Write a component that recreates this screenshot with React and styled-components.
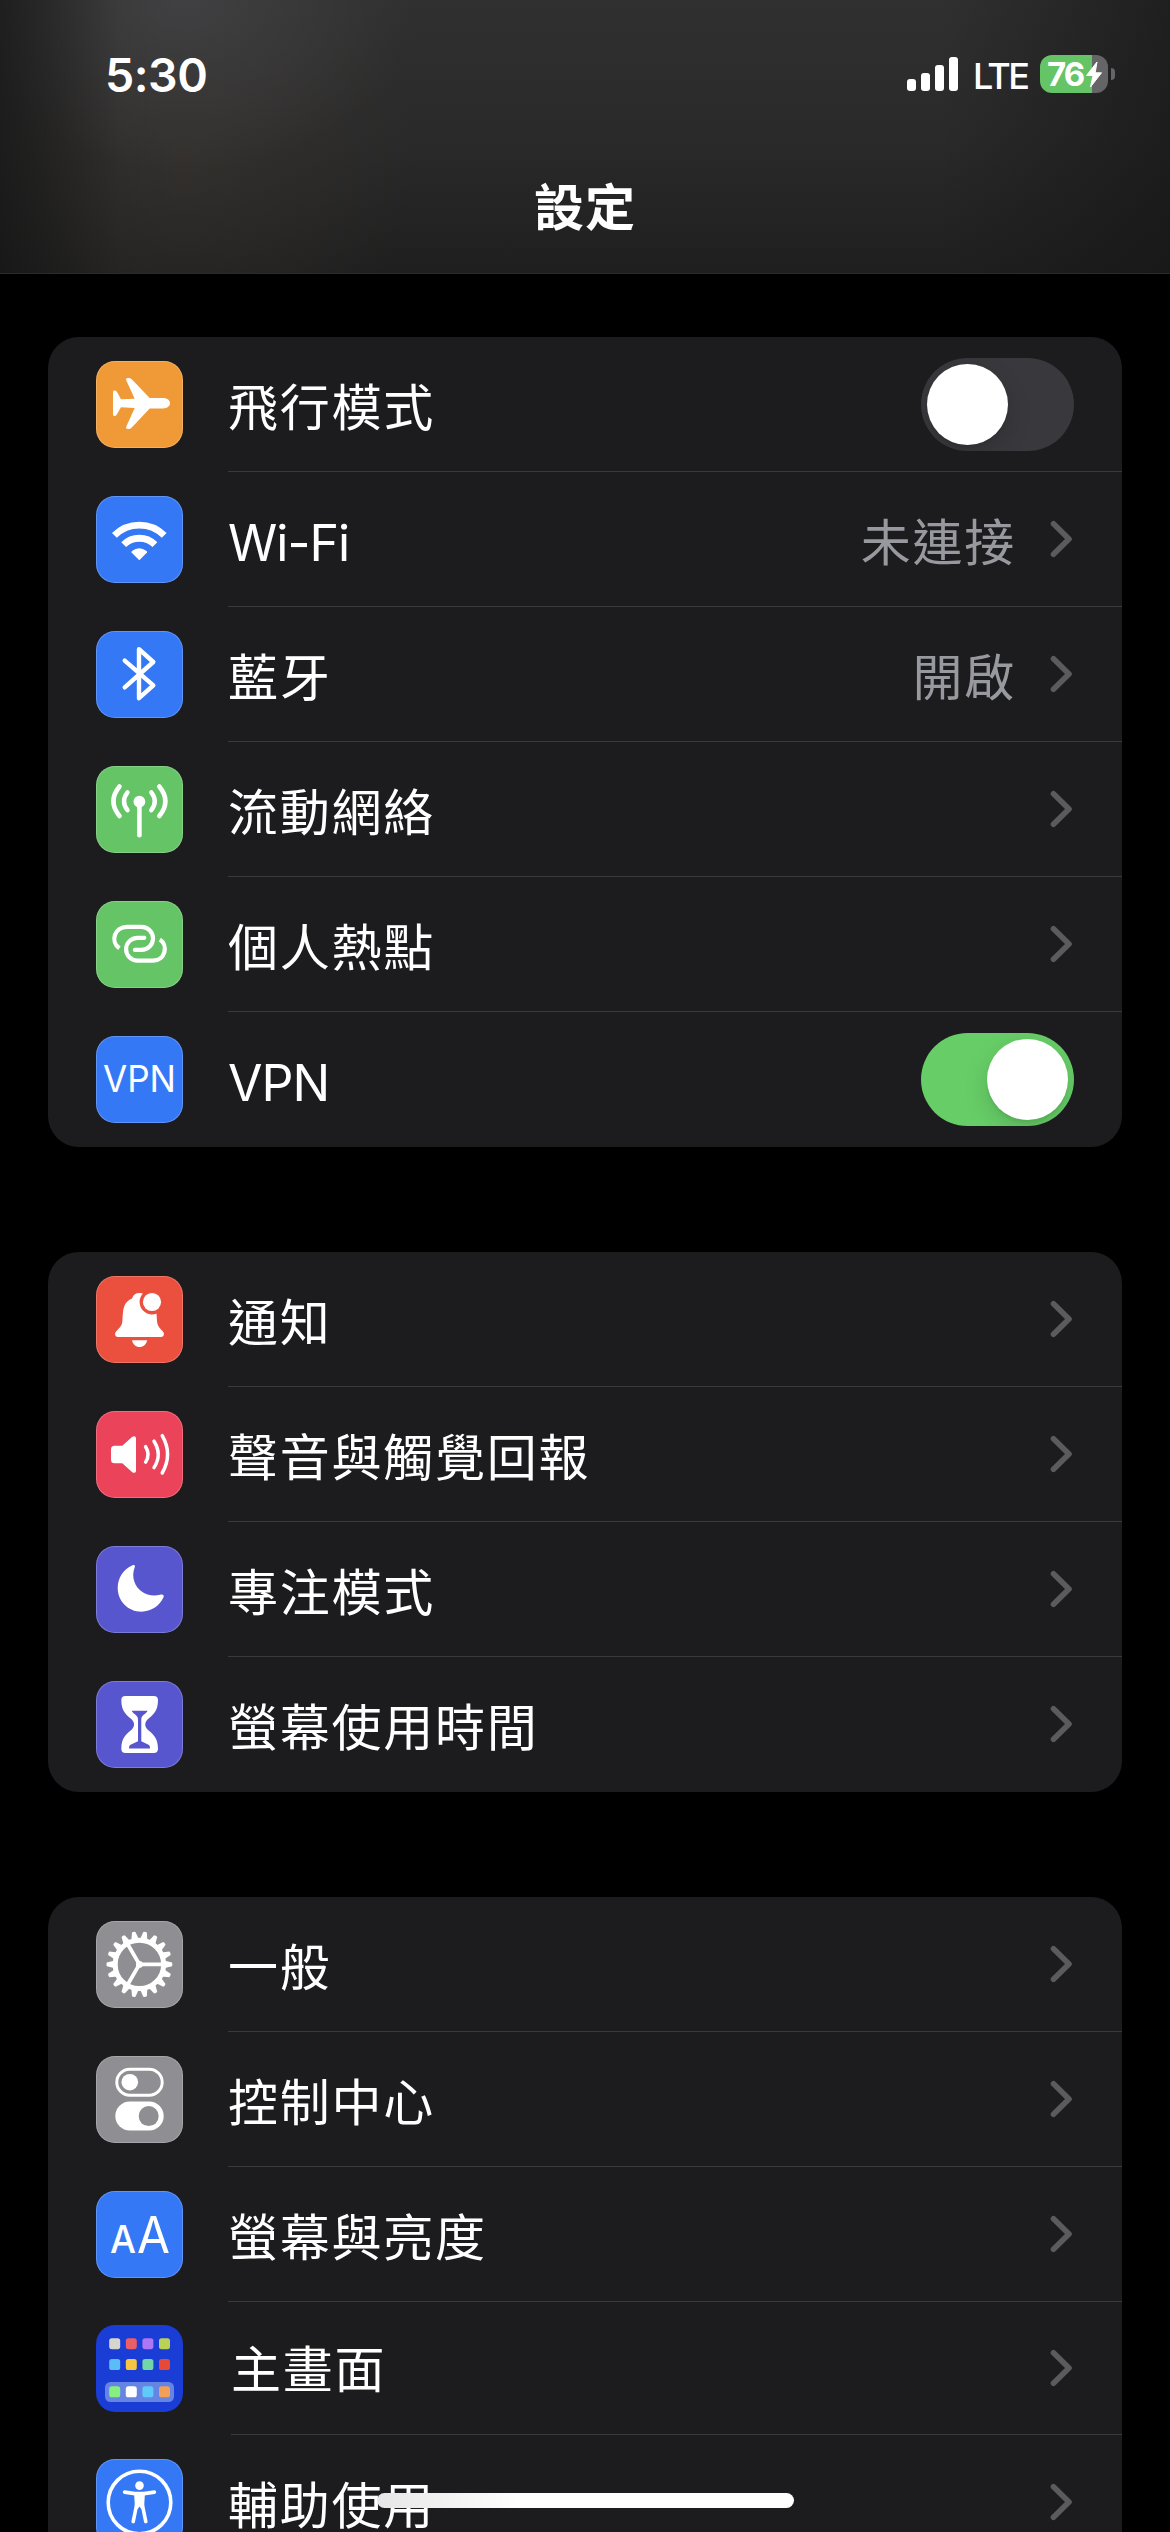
import React from "react";
import styled, { createGlobalStyle, css } from "styled-components";

const GlobalStyle = createGlobalStyle`
  * {
    box-sizing: border-box;
  }

  body {
    margin: 0;
    background-color: #000;
    font-family: "Inter", "Noto Sans CJK TC", sans-serif;
    color: #fff;
  }
`;

const Screen = styled.div`
  position: relative;
  width: 1170px;
  height: 2532px;
  overflow: hidden;
  background-color: #000;
`;

const Header = styled.header`
  display: flex;
  flex-direction: column;
  height: 274px;
  border-bottom: 1px solid #2b2b2b;
  background: linear-gradient(
      90deg,
      rgba(20, 20, 20, 0.65) 0,
      rgba(20, 20, 20, 0) 120px,
      rgba(20, 20, 20, 0) 940px,
      rgba(20, 20, 20, 0.6) 1170px
    ),
    radial-gradient(
      ellipse 230px 170px at 185px 0,
      rgba(70, 70, 73, 0.7),
      rgba(70, 70, 73, 0)
    ),
    radial-gradient(
      ellipse 230px 240px at 185px 150px,
      rgba(62, 56, 51, 0.48),
      rgba(62, 56, 51, 0)
    ),
    linear-gradient(180deg, #303030 0, #2a2a2a 50%, #1f1f1f 100%);
`;

const StatusBar = styled.div`
  display: flex;
  align-items: center;
  justify-content: space-between;
  height: 148px;
  padding: 0 55px 0 105px;
`;

const Time = styled.span`
  padding-top: 1px;
  font-size: 46.5px;
  font-weight: 600;
  line-height: 60px;
  letter-spacing: -0.5px;
`;

const StatusIcons = styled.div`
  display: flex;
  align-items: center;
`;

const Signal = styled.div`
  display: flex;
  align-items: flex-end;
  gap: 5px;
  height: 34px;
`;

const SignalBar = styled.i`
  width: 9px;
  height: ${({ $height }) => $height}px;
  border-radius: 3px;
  background-color: #fff;
`;

const Network = styled.span`
  width: 54px;
  margin: 4px 13px 0 15px;
  font-size: 36px;
  font-weight: 500;
  line-height: 44px;
  letter-spacing: -2.6px;
  white-space: nowrap;
`;

const Battery = styled.div`
  display: flex;
  align-items: center;
  width: 68px;
  height: 38px;
  padding-left: 7px;
  border-radius: 12px;
  background: linear-gradient(90deg, #65c466 52px, #656567 52px);
`;

const BatteryLevel = styled.span`
  width: 38px;
  font-size: 33px;
  font-weight: 700;
  line-height: 38px;
  letter-spacing: -2px;
`;

const BatteryTip = styled.i`
  width: 4px;
  height: 12px;
  margin-left: 3px;
  border-radius: 0 5px 5px 0;
  background-color: #656567;
`;

const Title = styled.h1`
  margin: 0;
  padding-top: 23px;
  font-size: 50px;
  font-weight: 700;
  line-height: 74px;
  text-align: center;
  letter-spacing: 1px;
`;

const Content = styled.main`
  display: flex;
  flex-direction: column;
  gap: 105px;
  padding: 63px 48px 0;
`;

const Card = styled.section`
  border-radius: 31px;
  background-color: #1c1c1e;
  overflow: hidden;
`;

const Row = styled.div`
  display: flex;
  align-items: flex-start;
  height: ${({ $short }) => ($short ? 133 : 135)}px;
  padding-left: 48px;
`;

const IconTile = styled.div`
  flex: none;
  width: 87px;
  height: 87px;
  margin-top: ${({ $short }) => ($short ? 23 : 24)}px;
  border-radius: 19px;
  background-color: ${({ $color }) => $color};
  overflow: hidden;
  ${({ $plain }) =>
    !$plain &&
    css`
      box-shadow: inset 0 0 0 1px rgba(255, 255, 255, 0.22);
    `}

  svg {
    display: block;
  }
`;

const RowBody = styled.div`
  display: flex;
  flex: 1;
  align-items: center;
  height: 100%;
  margin-left: ${({ $short }) => ($short ? 48 : 45)}px;
  padding-right: 48px;
  border-bottom: 1px solid ${({ $last }) => ($last ? "transparent" : "#3a3a3c")};
`;

const Label = styled.span`
  flex: 1;
  padding-top: ${({ $short }) => ($short ? 4 : 7)}px;
  font-size: 50px;
  line-height: 72px;
  letter-spacing: ${({ $latin }) => ($latin ? -1 : 1.75)}px;
  white-space: nowrap;
`;

const Value = styled.span`
  margin-right: 34px;
  padding-top: 7px;
  color: #98989f;
  font-size: 50px;
  line-height: 72px;
  letter-spacing: 1.75px;
`;

const Switch = styled.div`
  display: flex;
  justify-content: ${({ $on }) => ($on ? "flex-end" : "flex-start")};
  width: 153px;
  height: 93px;
  padding: 6px;
  border-radius: 47px;
  background-color: ${({ $on }) => ($on ? "#67ce67" : "#39393d")};
  overflow: hidden;
`;

const Knob = styled.i`
  width: 81px;
  height: 81px;
  border-radius: 50%;
  background-color: #fff;
  box-shadow: 0 9px 24px rgba(0, 0, 0, 0.15), 0 3px 3px rgba(0, 0, 0, 0.06);
`;

const HomeIndicator = styled.div`
  position: absolute;
  left: 377px;
  bottom: 24px;
  width: 417px;
  height: 15px;
  border-radius: 8px;
  background: linear-gradient(90deg, #e6e6e6, #fff 35%);
`;

const Glyph = ({ children }) => (
  <svg width="87" height="87" viewBox="0 0 87 87" fill="#fff">
    {children}
  </svg>
);

const Lines = ({ width = 4, cap = "round", children }) => (
  <g
    fill="none"
    stroke="#fff"
    strokeWidth={width}
    strokeLinecap={cap}
    strokeLinejoin="round"
  >
    {children}
  </g>
);

const Airplane = () => (
  <Glyph>
    <path d="M25 38.3 38.7 37.8 30.1 19Q29.6 17 31.5 17H33Q34.8 17 36 18.5L53.7 37H67C71.5 37 74 39.5 74 42.3 74 45 71.5 47.5 67 47.5H53.7L36 66.3Q34.8 68 33 68H31.5Q29.6 68 30.1 66L38.7 47 25 46.3 20.5 54Q20 55 18.5 55 17 55 17 53.5V31Q17 29.6 18.5 29.6 20 29.6 21 31Z" />
  </Glyph>
);

const Wifi = () => (
  <Glyph>
    <Lines width="6.8" cap="butt">
      <path d="M18.4 39.4A35.2 35.2 0 0 1 68.2 39.4M27.7 48.7A22.1 22.1 0 0 1 58.9 48.7" />
    </Lines>
    <path d="M43.3 64.2 35.6 56.4Q35.2 55.8 36 55.1 43.3 49.5 50.6 55.1 51.4 55.8 51 56.4Z" />
  </Glyph>
);

const Bluetooth = () => (
  <Glyph>
    <Lines width="4.4">
      <path d="M28.7 29.7 57.3 54.3 43 67.2V18.2L57.3 31 28.7 56.3" />
    </Lines>
  </Glyph>
);

const Antenna = () => (
  <Glyph>
    <circle cx="43.4" cy="35.7" r="5.9" />
    <Lines width="4.6">
      <path d="M43.4 38V69.3" />
      <path d="M63.3 20.5Q75.5 35.3 63.3 50M23.5 20.5Q11.3 35.3 23.5 50" />
    </Lines>
    <Lines width="4.4">
      <path d="M55.3 26.3Q62.3 35.3 55.3 44.2M31.5 26.3Q24.5 35.3 31.5 44.2" />
    </Lines>
  </Glyph>
);

const Hotspot = () => (
  <Glyph>
    <Lines width="4.2" cap="butt">
      <path d="M23.4 47.3C13.8 40.5 18.5 25.9 31 25.9H45.5A11.5 11.5 0 0 1 45.5 48.9H39" />
      <path d="M48.5 36.8H41.5A11.4 11.4 0 0 0 41.5 59.6H57C69.5 59.6 72.5 44 63.8 38.5" />
      <path strokeLinecap="round" d="M39 48.9H38.9M48.2 36.8H48.3" />
    </Lines>
  </Glyph>
);

const Vpn = () => (
  <Glyph>
    <text
      x="7"
      y="55.7"
      fontFamily="Inter, sans-serif"
      fontSize="37"
      textLength="73"
      lengthAdjust="spacingAndGlyphs"
    >
      VPN
    </text>
  </Glyph>
);

const Bell = () => (
  <Glyph>
    <path d="M22 61C19 61 18 57.5 20.5 55 24 51.3 26 49.5 26.4 45 27 33 27.2 26.3 36 22.5 37.2 18.8 40 17 43.3 17 46.7 17 50 18.8 51 22.5 59.8 26.3 60.5 33 61 45 61.4 49.5 63 51.3 66.5 55 69 57.5 68 61 65 61ZM36 64.2H51.2C50.4 68.4 47.2 71 43.6 71 40 71 36.8 68.4 36 64.2Z" />
    <circle cx="56" cy="26" r="12.4" fill="#eb4f3d" />
    <circle cx="56" cy="26" r="9.1" />
  </Glyph>
);

const Speaker = () => (
  <Glyph>
    <path d="M18.5 34.7H26.3L36 26C37.8 24.5 40 25 40 27.5V59.5C40 62 37.8 62.5 36 61L26.3 52.2H18.5Q15 52.2 15 48.7V38.2Q15 34.7 18.5 34.7Z" />
    <Lines width="3.5">
      <path d="M49.6 35.7Q54.6 43.4 49.6 51.1M58 30.2Q66.5 43.4 58 56.6M66.2 24.7Q77 43.4 66.2 62" />
    </Lines>
  </Glyph>
);

const Moon = () => (
  <Glyph>
    <path d="M38.8 21C36.8 26 36.8 31 38.3 35.5 41.5 45.5 52 51.5 64 48.8 67 47.8 68.4 49.2 67.4 51.6 63.5 60 55 65.7 45.5 65.7 32 65.7 21.7 55 21.7 42 21.7 32 27.5 23 36.5 19.3 38.4 18.6 39.4 19.4 38.8 21Z" />
  </Glyph>
);

const Hourglass = () => (
  <Glyph>
    <path d="M29.5 15H57.8Q62 15 62 19.2C62 31 56 34.5 51.5 38.5 48.5 41.5 48.5 45.5 51.5 48.5 56 52.5 62 56 62 67.8Q62 72 57.8 72H29.5Q25.3 72 25.3 67.8C25.3 56 31.3 52.5 35.8 48.5 38.8 45.5 38.8 41.5 35.8 38.5 31.3 34.5 25.3 31 25.3 19.2Q25.3 15 29.5 15Z" />
    <path
      fill="#5856ce"
      d="M35.7 29.7H51.6C50.5 32.6 45.3 34.2 45.3 38V60.3L53 64Q54.2 65 54 67.5H33Q32.8 65 34 64L42 60.3V38C42 34.2 36.8 32.6 35.7 29.7Z"
    />
  </Glyph>
);

const Gear = () => (
  <Glyph>
    {Array.from({ length: 18 }, (_, i) => (
      <path
        key={i}
        d="M68 39.6 76 41.6Q76.8 43.4 76 45.2L68 47.2Z"
        transform={`rotate(${i * 20} 43.4 43.4)`}
      />
    ))}
    <Lines width="5">
      <circle cx="43.4" cy="43.4" r="24.2" />
    </Lines>
    <Lines width="3.8">
      <path d="M43.4 43.4H67M43.4 43.4 31.6 23M43.4 43.4 31.6 63.8" />
    </Lines>
    <circle cx="43.4" cy="43.4" r="3.4" />
  </Glyph>
);

const Toggles = () => (
  <Glyph>
    <Lines width="3">
      <rect x="20.8" y="13.2" width="45.4" height="26" rx="13" />
    </Lines>
    <circle cx="33.8" cy="26.2" r="8.3" />
    <rect x="19.3" y="45.6" width="48.4" height="29" rx="14.5" />
    <circle cx="52.7" cy="60.1" r="10" fill="#8e8e93" />
  </Glyph>
);

const TextSize = () => (
  <Glyph>
    <g fontFamily="Inter, sans-serif">
      <text
        x="14"
        y="61.7"
        fontSize="38"
        fontWeight="500"
        textLength="26"
        lengthAdjust="spacingAndGlyphs"
      >
        A
      </text>
      <text x="41" y="61.7" fontSize="50" textLength="33" lengthAdjust="spacingAndGlyphs">
        A
      </text>
    </g>
  </Glyph>
);

const appColors = [
  ["#d6d6ce", "#ea5e67", "#ae76f5", "#b9d255"],
  ["#5bbdf8", "#f7c444", "#71d6a8", "#e64a37"],
  ["#86ef7f", "#ffffff", "#5fcaf9", "#f2a057"],
];

const HomeGrid = () => (
  <Glyph>
    <rect x="9" y="57" width="69" height="20" rx="5.5" fill="#6684e3" />
    {appColors.map((row, y) =>
      row.map((color, x) => (
        <rect
          key={color}
          x={13.2 + x * 16.6}
          y={[13.2, 34, 61.3][y]}
          width="11"
          height="11"
          rx="2.6"
          fill={color}
        />
      ))
    )}
  </Glyph>
);

const Accessibility = () => (
  <Glyph>
    <Lines width="3.6">
      <circle cx="43.5" cy="43.5" r="31.3" />
      <path d="M28.6 33.1 39 34.6H48L58.4 33.1" />
      <path d="M40.6 46 37.2 62.6M46.4 46 49.8 62.6" />
    </Lines>
    <circle cx="43.5" cy="26.6" r="4.3" />
    <path d="M38 33H49L48 50H45.3L43.5 47.5 41.7 50H39Z" />
  </Glyph>
);

const Chevron = () => (
  <svg width="24" height="40" viewBox="0 0 24 40">
    <path
      d="M3.5 4.7 19 20 3.5 35.3"
      fill="none"
      stroke="#5b5b5f"
      strokeWidth="5.6"
      strokeLinecap="round"
      strokeLinejoin="round"
    />
  </svg>
);

const Bolt = () => (
  <svg width="18" height="27" viewBox="0 0 18 27">
    <path
      d="M12 1 1.5 14.5H8L5.5 26 16.5 11.8H10.2Z"
      fill="#fff"
      stroke="#fff"
      strokeLinejoin="round"
    />
  </svg>
);

const groups = [
  [
    { label: "飛行模式", color: "#f09a37", icon: Airplane, toggle: "off" },
    { label: "Wi-Fi", color: "#3478f6", icon: Wifi, value: "未連接", latin: true },
    { label: "藍牙", color: "#3478f6", icon: Bluetooth, value: "開啟" },
    { label: "流動網絡", color: "#65c466", icon: Antenna },
    { label: "個人熱點", color: "#65c466", icon: Hotspot },
    { label: "VPN", color: "#3478f6", icon: Vpn, toggle: "on", latin: true },
  ],
  [
    { label: "通知", color: "#eb4f3d", icon: Bell },
    { label: "聲音與觸覺回報", color: "#eb445a", icon: Speaker },
    { label: "專注模式", color: "#5856ce", icon: Moon },
    { label: "螢幕使用時間", color: "#5856ce", icon: Hourglass },
  ],
  [
    { label: "一般", color: "#8e8e93", icon: Gear },
    { label: "控制中心", color: "#8e8e93", icon: Toggles },
    { label: "螢幕與亮度", color: "#3478f6", icon: TextSize },
    { label: "主畫面", color: "#1a3dd5", icon: HomeGrid, short: true, plain: true },
    { label: "輔助使用", color: "#3478f6", icon: Accessibility },
  ],
];

const SettingRow = ({ item, last }) => {
  const { label, color, icon: Icon, value, toggle, latin, short, plain } = item;
  return (
    <Row $short={short}>
      <IconTile $color={color} $short={short} $plain={plain}>
        <Icon />
      </IconTile>
      <RowBody $last={last} $short={short}>
        <Label $latin={latin} $short={short}>
          {label}
        </Label>
        {value && <Value>{value}</Value>}
        {toggle ? (
          <Switch $on={toggle === "on"}>
            <Knob />
          </Switch>
        ) : (
          <Chevron />
        )}
      </RowBody>
    </Row>
  );
};

const App = () => {
  return (
    <>
      <GlobalStyle />
      <Screen>
        <Header>
          <StatusBar>
            <Time>5:30</Time>
            <StatusIcons>
              <Signal>
                <SignalBar $height={12} />
                <SignalBar $height={18} />
                <SignalBar $height={26} />
                <SignalBar $height={34} />
              </Signal>
              <Network>LTE</Network>
              <Battery>
                <BatteryLevel>76</BatteryLevel>
                <Bolt />
              </Battery>
              <BatteryTip />
            </StatusIcons>
          </StatusBar>
          <Title>設定</Title>
        </Header>
        <Content>
          {groups.map((items, i) => (
            <Card key={i}>
              {items.map((item, j) => (
                <SettingRow key={item.label} item={item} last={j === items.length - 1} />
              ))}
            </Card>
          ))}
        </Content>
        <HomeIndicator />
      </Screen>
    </>
  );
};

export default App;
